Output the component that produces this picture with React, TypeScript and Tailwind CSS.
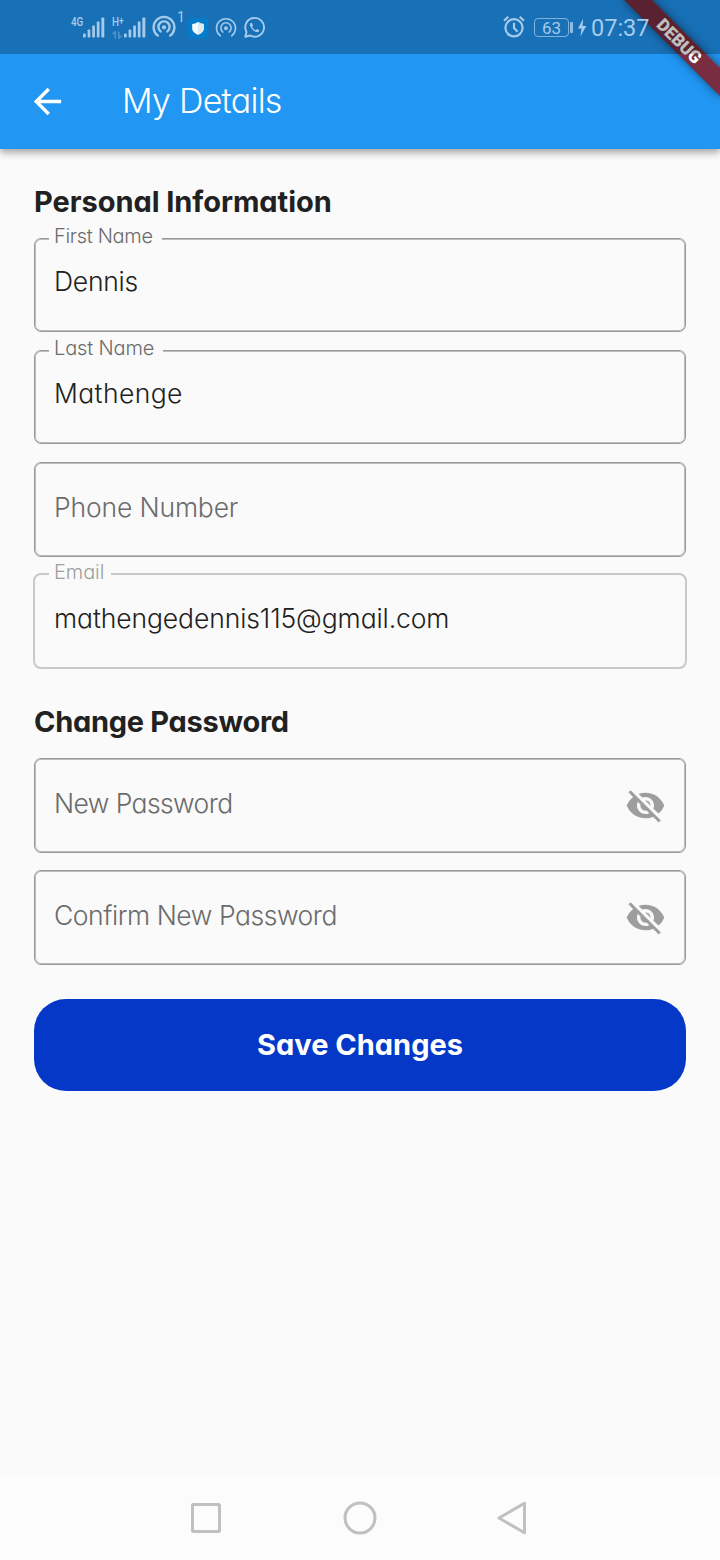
import type { ReactNode } from "react";
import { MdArrowBack, MdVisibilityOff } from "react-icons/md";

function Signal() {
  return (
    <svg width="22" height="21" viewBox="0 0 22 21" fill="currentColor">
      <rect x="0" y="16.5" width="2.7" height="4" rx="0.8" />
      <rect x="4.6" y="12.5" width="2.7" height="8" rx="0.8" />
      <rect x="9.2" y="8.5" width="2.7" height="12" rx="0.8" />
      <rect x="13.8" y="4.5" width="2.7" height="16" rx="0.8" />
      <rect x="18.4" y="0.5" width="2.9" height="20" rx="0.8" />
    </svg>
  );
}

function Hotspot({ size, stroke }: { size: number; stroke: number }) {
  return (
    <svg width={size} height={size} viewBox="0 0 24 24" fill="none" stroke="currentColor" strokeWidth={stroke} strokeLinecap="round">
      <circle cx="12" cy="12.3" r="2.1" fill="currentColor" stroke="none" />
      <path d="M8.6 16.4a5.6 5.6 0 1 1 6.8 0" />
      <path d="M5.8 20.6a10.4 10.4 0 1 1 12.4 0" />
    </svg>
  );
}

function StatusBar() {
  return (
    <div className="absolute inset-x-0 top-0 flex h-[54px] items-start bg-black/25 font-normal text-[#a6cbea]">
      <div className="ml-[71px] mt-[15px] w-3 font-['Roboto',sans-serif] text-[13px]/[14px] font-medium [transform-origin:left] scale-x-[0.76]">
        4G
      </div>
      <div className="mt-[17px]"><Signal /></div>
      <div className="ml-[7px] mt-[15px] flex w-3 flex-col">
        <span className="font-['Roboto',sans-serif] text-[13px]/[14px] font-medium [transform-origin:left] scale-x-[0.76]">
          H<span className="relative -top-[2px] text-[11px]">+</span>
        </span>
        <svg width="10" height="8" viewBox="0 0 10 8" className="mt-[1px] opacity-40" fill="none" stroke="currentColor" strokeWidth="1.5">
          <path d="M0.500 3.200 3.200 0.800V7.500M9.800 4.500 6.800 7.200V0.500" />
        </svg>
      </div>
      <div className="mt-[17px]"><Signal /></div>
      <div className="ml-[6px] mt-[15px]"><Hotspot size={24} stroke={2.4} /></div>
      <div className="ml-[1px] mt-[9px] w-[11px] font-['Roboto',sans-serif] text-[14px]/[16px]">1</div>
      <svg className="mt-[18px]" width="20" height="21" viewBox="0 0 20 21">
        <rect width="20" height="20.5" rx="3.5" fill="#067bca" />
        <path d="M10 4c2 1.400 3.800 1.800 5.800 1.900v4.600c0 3-2.800 5-5.800 6.200-3-1.200-5.800-3.200-5.800-6.200V5.900C6.200 5.800 8 5.400 10 4Z" fill="#f4faff" />
        <path d="M10 4c2 1.400 3.800 1.800 5.800 1.900v4.600c0 3-2.800 5-5.800 6.200Z" fill="#dbe9f3" />
      </svg>
      <div className="ml-[7px] mt-[17px]"><Hotspot size={22} stroke={1.7} /></div>
      <svg className="ml-[6px] mt-[16px]" width="23" height="23" viewBox="0 0 24 24" fill="none" stroke="currentColor" strokeWidth="2">
        <path d="M2.300 21.700 3.700 16.700A9.800 9.800 0 1 1 7.300 20.300Z" strokeLinejoin="round" />
        <path d="M8 7.200c-1.200.8-1.100 2.600.3 4.800 1.500 2.400 3.500 4.200 5.600 4.800 1.500.4 2.900-.2 3.200-1.900l-2.400-1.300-1.300 1.300c-1.600-.6-3-1.900-3.900-3.700l1-1.200L9.400 7.200Z" fill="currentColor" stroke="none" />
      </svg>
      <svg className="ml-[237px] mt-[15px]" width="22" height="23" viewBox="0 0 22 23" fill="none" stroke="currentColor" strokeWidth="2.200">
        <circle cx="11" cy="12.800" r="8.600" />
        <path d="M11 7.800v5.200l3.600 3.600M1 5.700 5.300 1.800M21 5.700 16.700 1.800" />
      </svg>
      <div className="ml-[9px] mt-[18px] flex h-[19px] w-[35px] items-center justify-center rounded-[4px] border border-[#7fb2dd] font-['Roboto',sans-serif] text-[17px]/[18px]">
        63
      </div>
      <div className="ml-[1px] mt-[22px] h-[11px] w-[3px] rounded-[1px] bg-[#8fbce2]" />
      <svg className="ml-[4px] mt-[18px]" width="10" height="19" viewBox="0 0 10 19" fill="currentColor">
        <path d="M6.200 0.500 1 10.500h3.500L3.400 18.500 9.300 8H5.600Z" />
      </svg>
      <div className="ml-[4px] mt-[14px] font-['Roboto',sans-serif] text-[23.500px]/[28px]">07:37</div>
    </div>
  );
}

function DebugBanner() {
  return (
    <div className="pointer-events-none absolute right-0 top-0 h-[110px] w-[110px] overflow-hidden">
      <div className="absolute left-[42px] top-[47.600px] flex h-[20.400px] w-[136px] origin-[68px_-47.600px] rotate-45 items-center justify-center bg-[#8d1616]/81 font-['Roboto',sans-serif] text-[17.340px]/[20px] font-black text-white shadow-[0_0_10px_rgba(0,0,0,0.5)]">
        DEBUG
      </div>
    </div>
  );
}

function Field({ label, value, boxClass, labelClass, valueClass, disabled }: {
  label?: string; value: ReactNode; boxClass: string; labelClass?: string; valueClass: string; disabled?: boolean;
}) {
  return (
    <div
      className={
        (disabled
          ? "relative -mx-px rounded-[8px] border-2 border-[#c9c9c9] pl-[18px] "
          : "relative rounded-[7px] border border-[#9a9a9a] pl-[19px] shadow-[inset_0_0_0_1px_#bcbcbc] ") + boxClass
      }
    >
      {label && (
        <span className={"absolute left-[14px] bg-[#fafafa] pl-[5px] text-[20px]/[20px] " + labelClass}>
          {label}
        </span>
      )}
      <div className={"text-[26.500px]/[40px] " + valueClass}>{value}</div>
    </div>
  );
}

function PasswordField({ text, textClass }: { text: string; textClass: string }) {
  return (
    <div className="flex h-[95px] items-start justify-between rounded-[7px] border border-[#9a9a9a] pl-[19px] pr-[19px] shadow-[inset_0_0_0_1px_#bcbcbc]">
      <span className={"pt-[24px] text-[26.500px]/[40px] text-[#6b6b6b] " + textClass}>{text}</span>
      <MdVisibilityOff className="mt-[26px] size-[41px] text-[#9e9e9e]" />
    </div>
  );
}

export default function App() {
  return (
    <div className="relative flex h-[1560px] w-[720px] flex-col overflow-hidden bg-[#fafafa] font-['Inter',sans-serif] font-light text-[#212121] [font-feature-settings:'cv11']">
      <header className="flex h-[149px] shrink-0 items-center bg-[#2196f3] pt-[54px] text-white shadow-[0_3px_8px_rgba(0,0,0,0.38)]">
        <MdArrowBack className="ml-[27px] size-[41px]" />
        <h1 className="-mt-[1px] ml-[54px] text-[34px]/[40px] tracking-[-0.750px]">My Details</h1>
      </header>
      <DebugBanner />
      <StatusBar />

      <main className="flex grow flex-col px-[34px] pt-[35px]">
        <h2 className="text-[29px]/[36px] font-bold tracking-[-0.050px]">Personal Information</h2>
        <div className="mt-[18px] flex flex-col">
          <Field label="First Name" value="Dennis" boxClass="h-[94px]" labelClass="-top-[13px] tracking-[-0.300px] pr-[9px] text-[#6b6b6b]" valueClass="pt-[22px] tracking-[-0.250px]" />
          <Field label="Last Name" value="Mathenge" boxClass="mt-[18px] h-[94px]" labelClass="-top-[13px] tracking-[-0.150px] pr-[9px] text-[#6b6b6b]" valueClass="pt-[22px] tracking-[0.400px]" />
          <Field value="Phone Number" boxClass="mt-[18px] h-[95px]" valueClass="pt-[24px] tracking-[-0.150px] text-[#6b6b6b]" />
          <Field label="Email" value="mathengedennis115@gmail.com" boxClass="mt-[16px] h-[96px]" labelClass="-top-[13px] tracking-[-0.100px] pr-[7px] text-[#9e9e9e]" valueClass="pt-[23px] pl-px tracking-[-0.100px]" disabled />
        </div>
        <h2 className="mt-[35px] text-[29px]/[36px] font-bold tracking-[-0.280px]">Change Password</h2>
        <div className="mt-[18px] flex flex-col gap-[17px]">
          <PasswordField text="New Password" textClass="tracking-[-0.600px]" />
          <PasswordField text="Confirm New Password" textClass="tracking-[-0.450px]" />
        </div>
        <button className="mt-[34px] h-[92px] rounded-[32px] bg-[#0638c8] text-[29px]/[36px] font-bold text-white">
          Save Changes
        </button>
      </main>

      <nav className="flex h-[84px] shrink-0 items-center bg-[#fcfcfc] text-[#c0c0c0]">
        <svg className="ml-[190px]" width="32" height="32" viewBox="0 0 32 32" fill="none" stroke="currentColor" strokeWidth="3">
          <rect x="2.500" y="2.500" width="27" height="27" rx="1" />
        </svg>
        <svg className="ml-[120px]" width="36" height="36" viewBox="0 0 36 36" fill="none" stroke="currentColor" strokeWidth="3">
          <circle cx="18" cy="18" r="15" />
        </svg>
        <svg className="ml-[118px]" width="32" height="36" viewBox="0 0 32 36" fill="none" stroke="currentColor" strokeWidth="3" strokeLinejoin="round">
          <path d="M28.500 3.200V32.800L3 18Z" />
        </svg>
      </nav>
    </div>
  );
}
